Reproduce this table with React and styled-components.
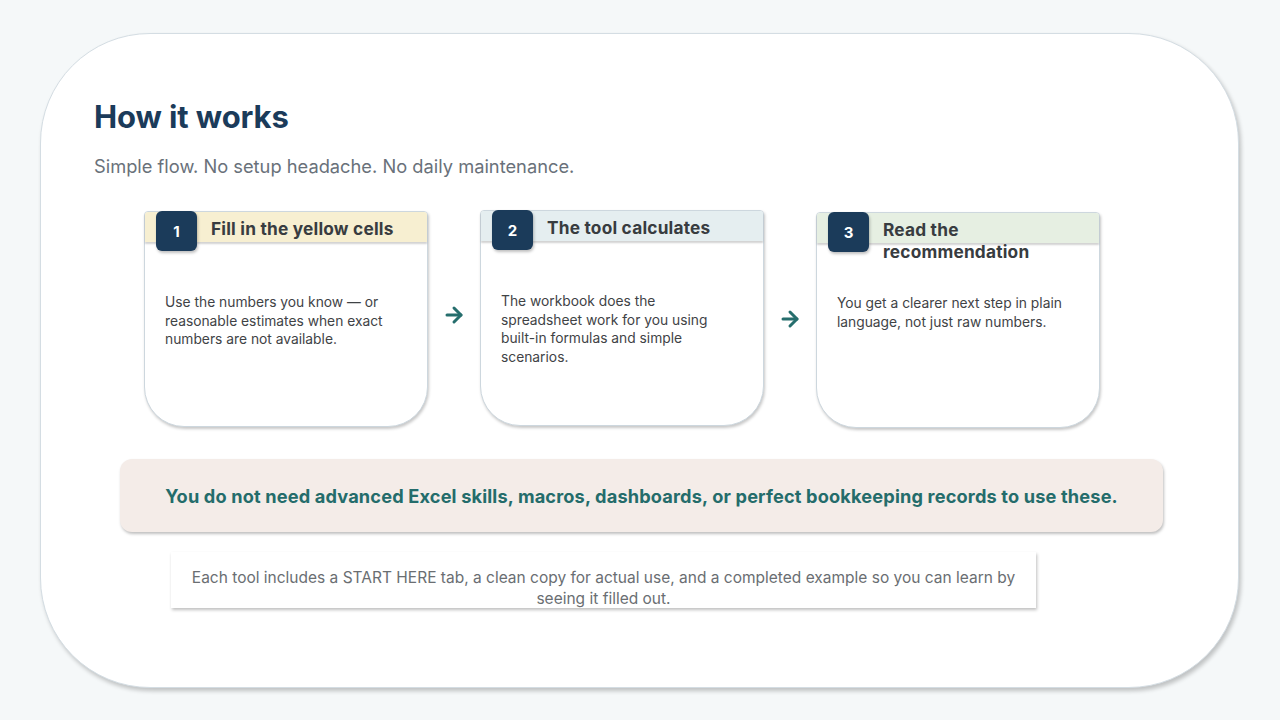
import styled, { createGlobalStyle } from 'styled-components';
import { ArrowRight } from 'lucide-react';

const steps = [
  {
    n: 1,
    title: 'Fill in the yellow cells',
    body: 'Use the numbers you know — or reasonable estimates when exact numbers are not available.',
    tint: '#f7efd1',
    shift: 1,
  },
  {
    n: 2,
    title: 'The tool calculates',
    body: 'The workbook does the spreadsheet work for you using built-in formulas and simple scenarios.',
    tint: '#e5eef0',
    shift: 0,
    arrowDrop: -3,
  },
  {
    n: 3,
    title: 'Read the recommendation',
    body: 'You get a clearer next step in plain language, not just raw numbers.',
    tint: '#e6efe2',
    shift: 2,
    arrowDrop: 1,
  },
];

export default function App() {
  return (
    <>
      <GlobalStyle />
      <Page>
        <Sheet>
          <Title>How it works</Title>
          <Subtitle>Simple flow. No setup headache. No daily maintenance.</Subtitle>

          <Steps>
            {steps.map((s, i) => (
              <StepGroup key={s.n}>
                {i > 0 && (
                  <Arrow $drop={s.arrowDrop}>
                    <ArrowRight size={24} strokeWidth={3} />
                  </Arrow>
                )}
                <Card $shift={s.shift}>
                  <CardHead $tint={s.tint}>
                    <Badge>{s.n}</Badge>
                    <CardTitle>{s.title}</CardTitle>
                  </CardHead>
                  <CardBody>{s.body}</CardBody>
                </Card>
              </StepGroup>
            ))}
          </Steps>

          <Banner>
            You do not need advanced Excel skills, macros, dashboards, or perfect bookkeeping records to use these.
          </Banner>

          <Note>
            Each tool includes a START HERE tab, a clean copy for actual use, and a completed example so you can learn by
            seeing it filled out.
          </Note>
        </Sheet>
      </Page>
    </>
  );
}

const GlobalStyle = createGlobalStyle`
  html, body {
    margin: 0;
    padding: 0;
    background: #f5f8f9;
  }
  body {
    font-family: 'Inter', 'Noto Sans', sans-serif;
    -webkit-font-smoothing: antialiased;
  }
`;

const Page = styled.div`
  width: 1280px;
  height: 720px;
  padding: 33px 0 0 40px;
  box-sizing: border-box;
`;

const Sheet = styled.div`
  width: 1199px;
  height: 655px;
  box-sizing: border-box;
  background: #ffffff;
  border: 1px solid #d4dde3;
  border-radius: 110px;
  box-shadow: 2px 3px 4px rgba(0, 0, 0, 0.22);
  padding: 64px 0 0 53px;
  display: flex;
  flex-direction: column;
`;

const Title = styled.h1`
  margin: 0;
  font-size: 31px;
  line-height: 38px;
  font-weight: 700;
  color: #1b3b5a;
  letter-spacing: -0.1px;
`;

const Subtitle = styled.p`
  margin: 18px 0 0;
  font-size: 18.3px;
  line-height: 24px;
  color: #69717a;
`;

const Steps = styled.div`
  display: flex;
  align-items: flex-start;
  margin: 32px 0 0 50px;
`;

const StepGroup = styled.div`
  display: flex;
  align-items: flex-start;
`;

const Arrow = styled.div`
  width: 52px;
  height: 216px;
  margin-top: ${(p) => p.$drop || 0}px;
  display: flex;
  align-items: center;
  justify-content: center;
  color: #266e6d;
`;

const Card = styled.div`
  width: 284px;
  height: 216px;
  box-sizing: border-box;
  margin-top: ${(p) => p.$shift}px;
  background: #ffffff;
  border: 1px solid #cdd7de;
  border-radius: 4px 4px 40px 40px;
  box-shadow: 1px 2px 3px rgba(0, 0, 0, 0.22);
  display: flex;
  flex-direction: column;
`;

const CardHead = styled.div`
  height: 30px;
  flex-shrink: 0;
  background: ${(p) => p.$tint};
  border-radius: 3px 3px 0 0;
  box-shadow: 0 2px 2px rgba(0, 0, 0, 0.18);
  display: flex;
  align-items: flex-start;
  gap: 14px;
  padding: 0 12px 0 11px;
  position: relative;
`;

const Badge = styled.div`
  width: 41px;
  height: 40px;
  flex-shrink: 0;
  margin-top: -1px;
  border-radius: 6px;
  background: #1b3b5a;
  color: #ffffff;
  font-size: 15px;
  font-weight: 700;
  display: flex;
  align-items: center;
  justify-content: center;
  box-shadow: 1px 2px 3px rgba(0, 0, 0, 0.25);
`;

const CardTitle = styled.div`
  padding-top: 6px;
  font-size: 17.3px;
  line-height: 22px;
  font-weight: 700;
  letter-spacing: 0.2px;
  color: #383c40;
`;

const CardBody = styled.p`
  margin: 0;
  padding: 51px 30px 0 20px;
  font-size: 13.8px;
  line-height: 18.7px;
  color: #3f4346;
`;

const Banner = styled.div`
  margin: 31px 0 0 26px;
  width: 1043px;
  height: 73px;
  box-sizing: border-box;
  background: #f4ece8;
  border-radius: 12px;
  box-shadow: 1px 2px 3px rgba(0, 0, 0, 0.25);
  display: flex;
  align-items: center;
  justify-content: center;
  font-size: 18.2px;
  font-weight: 700;
  letter-spacing: 0.15px;
  color: #246c6b;
`;

const Note = styled.div`
  margin: 20px 0 0 77px;
  width: 865px;
  height: 56px;
  box-sizing: border-box;
  padding: 15px 16px 0;
  background: #ffffff;
  box-shadow: 1px 2px 3px rgba(0, 0, 0, 0.25);
  text-align: center;
  font-size: 15.5px;
  line-height: 21px;
  color: #6a6e72;
`;
